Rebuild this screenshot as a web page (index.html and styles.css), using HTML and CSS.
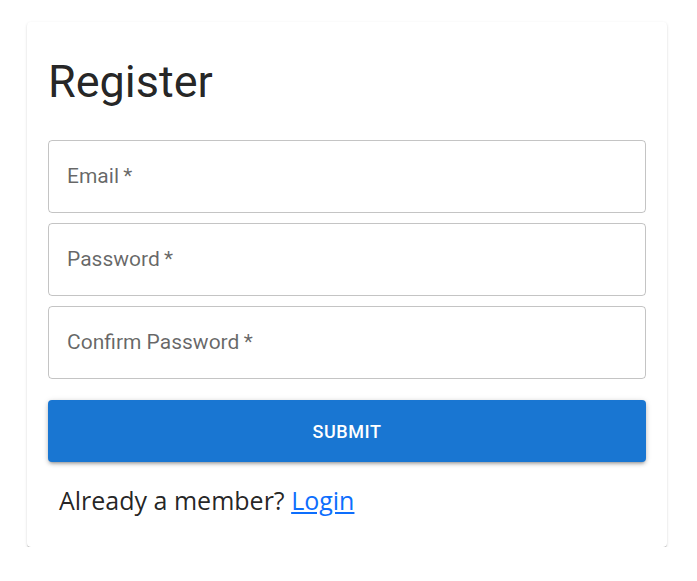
FILE: index.html
```html
<!DOCTYPE html>
<html>
<head>
<meta charset="utf-8">
<link rel="stylesheet" href="styles.css">
</head>
<body>
<div class="card">
  <h1 class="title">Register</h1>
  <form class="form">
    <div class="field"><span class="label">Email&thinsp;*</span></div>
    <div class="field"><span class="label">Password&thinsp;*</span></div>
    <div class="field"><span class="label">Confirm Password&thinsp;*</span></div>
    <button type="button" class="submit">SUBMIT</button>
  </form>
  <p class="footer">Already a member? <a href="#" class="link">Login</a></p>
</div>
</body>
</html>
```
FILE: styles.css
```css
html, body {
  margin: 0;
  padding: 0;
  background: #fff;
}
body {
  padding: 22px 30px 0 27px;
  font-family: Roboto, "Liberation Sans", sans-serif;
}
.card {
  width: 640px;
  box-sizing: border-box;
  height: 525px;
  padding: 0 21px;
  border-radius: 4px;
  background: #fff;
  box-shadow: 0 2px 1px -1px rgba(0,0,0,0.2), 0 1px 1px 0 rgba(0,0,0,0.14), 0 1px 3px 0 rgba(0,0,0,0.12);
}
.title {
  margin: 0;
  padding-top: 32px;
  font-size: 45px;
  font-weight: 400;
  line-height: 56px;
  color: rgba(0,0,0,0.87);
  letter-spacing: 0;
}
.form {
  margin-top: 30px;
  display: flex;
  flex-direction: column;
  gap: 10px;
}
.field {
  height: 73px;
  box-sizing: border-box;
  border: 1px solid rgba(0,0,0,0.23);
  border-radius: 4px;
  display: flex;
  align-items: center;
  padding: 0 18px 2px;
}
.label {
  font-size: 21px;
  color: rgba(0,0,0,0.6);
}
.submit {
  margin-top: 11px;
  height: 62px;
  border: none;
  border-radius: 4px;
  background: #1976d2;
  color: #fff;
  font-family: Roboto, "Liberation Sans", sans-serif;
  font-weight: 500;
  font-size: 18px;
  letter-spacing: 0.6px;
  box-shadow: 0 3px 3px -2px rgba(0,0,0,0.25), 0 2px 4px 0 rgba(0,0,0,0.16), 0 1px 6px 0 rgba(0,0,0,0.12);
}
.footer {
  margin: 21px 0 0 11px;
  font-family: "Open Sans", "Noto Sans", sans-serif;
  font-size: 25px;
  line-height: 34px;
  color: rgba(0,0,0,0.87);
}
.link {
  color: #0d6efd;
  text-decoration: underline;
}
```
